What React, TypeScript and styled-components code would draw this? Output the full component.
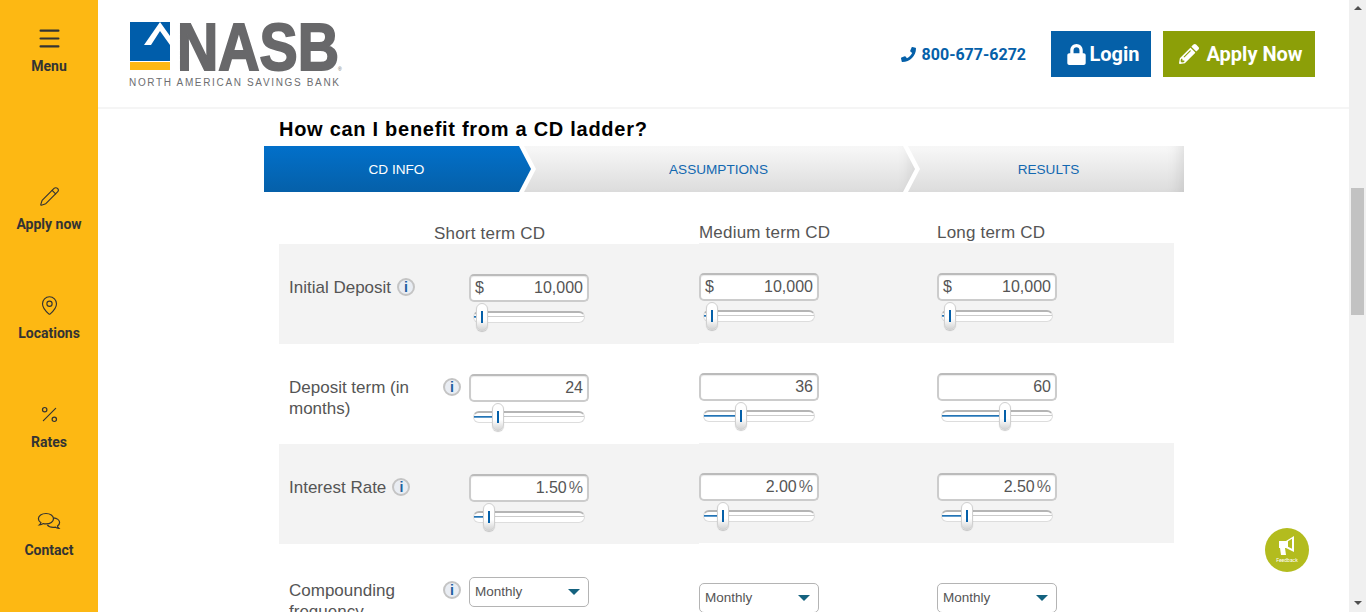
import React from 'react';
import styled, { createGlobalStyle } from 'styled-components';
import { Pencil, MapPin, Percent, Menu as MenuIcon } from 'lucide-react';
import { FaLock, FaPencilAlt, FaPhone } from 'react-icons/fa';

const GlobalStyle = createGlobalStyle`
  html, body {
    margin: 0;
    height: 612px;
    overflow: hidden;
    background: #fff;
  }
  * {
    box-sizing: border-box;
  }
`;

const Page = styled.div`
  display: flex;
  width: 1366px;
  height: 612px;
  overflow: hidden;
  position: relative;
  font-family: 'Liberation Sans', Arial, sans-serif;
`;

const Sidebar = styled.nav`
  width: 98px;
  flex: none;
  background: #fdb813;
  padding-top: 27px;
  display: flex;
  flex-direction: column;
`;

const SideItem = styled.a<{ $height: number }>`
  height: ${(p) => p.$height}px;
  display: flex;
  flex-direction: column;
  align-items: center;
  color: #333;
  font-family: Roboto, sans-serif;
  font-size: 14px;
  font-weight: 700;
  line-height: 18px;
  gap: 8px;
`;

const SideIcon = styled.span`
  height: 22px;
  display: flex;
  align-items: center;
  justify-content: center;
`;

const Main = styled.div`
  flex: 1;
  min-width: 0;
`;

const Header = styled.header`
  height: 109px;
  border-bottom: 2px solid #f5f5f5;
  display: flex;
  align-items: flex-start;
  justify-content: space-between;
  padding: 31px 34px 0 31px;
`;

const LogoSvg = styled.svg`
  display: block;
  margin-top: -12px;
`;

const HeaderActions = styled.div`
  display: flex;
  align-items: center;
  height: 46px;
`;

const Phone = styled.a`
  display: flex;
  align-items: center;
  gap: 6px;
  color: #0560a9;
  font-family: Roboto, sans-serif;
  font-size: 16px;
  font-weight: 700;
  margin-right: 13px;
`;

const ActionButton = styled.a<{ $bg: string; $width: number; $gap: number }>`
  width: ${(p) => p.$width}px;
  height: 46px;
  background: ${(p) => p.$bg};
  color: #fff;
  display: flex;
  align-items: center;
  justify-content: center;
  gap: ${(p) => p.$gap}px;
  padding-left: 4px;
  font-family: Roboto, sans-serif;
  font-size: 20px;
  font-weight: 700;
  margin-left: 12px;
`;

const Content = styled.div`
  width: 920px;
  margin-left: 166px;
`;

const Title = styled.h1`
  margin: 0;
  padding-left: 15px;
  height: 37px;
  padding-top: 8px;
  font-size: 20px;
  line-height: 24px;
  letter-spacing: 0.72px;
  font-weight: 700;
  color: #000;
`;

const Steps = styled.div`
  display: flex;
  height: 46px;
`;

const Step = styled.div<{ $active?: boolean; $width: number; $first?: boolean; $last?: boolean }>`
  width: ${(p) => p.$width}px;
  flex: none;
  margin-left: ${(p) => (p.$first ? 0 : -7)}px;
  display: flex;
  align-items: center;
  justify-content: center;
  padding-top: 1px;
  padding-right: 2px;
  padding-left: ${(p) => (p.$last ? 7 : 0)}px;
  font-size: 13.6px;
  color: ${(p) => (p.$active ? '#fff' : '#1368b0')};
  background: ${(p) =>
    p.$active
      ? 'linear-gradient(#0270ca, #0560a9)'
      : 'linear-gradient(#f8f8f8, #dcdcdc)'};
  box-shadow: ${(p) => (p.$active ? 'none' : 'inset -14px 0 14px -10px rgba(0, 0, 0, 0.1)')};
  clip-path: ${(p) =>
    p.$first
      ? 'polygon(0 0, calc(100% - 12px) 0, 100% 50%, calc(100% - 12px) 100%, 0 100%)'
      : p.$last
        ? 'polygon(0 0, 100% 0, 100% 100%, 0 100%, 12px 50%)'
        : 'polygon(0 0, calc(100% - 12px) 0, 100% 50%, calc(100% - 12px) 100%, 0 100%, 12px 50%)'};
`;

const Table = styled.div`
  display: flex;
  margin-left: 15px;
  width: 895px;
  color: #555;
  font-size: 17px;
`;

const Block = styled.div<{ $width: number; $top: number }>`
  width: ${(p) => p.$width}px;
  flex: none;
  padding-top: ${(p) => p.$top}px;
`;

const HeadRow = styled.div<{ $columns: string }>`
  display: grid;
  grid-template-columns: ${(p) => p.$columns};
  height: 28px;
  padding-top: 9px;
  line-height: 18px;
  letter-spacing: 0.2px;
  white-space: nowrap;
`;

const Row = styled.div<{ $columns: string; $shaded?: boolean; $padTop?: number }>`
  display: grid;
  grid-template-columns: ${(p) => p.$columns};
  align-content: start;
  height: 100px;
  padding-top: ${(p) => p.$padTop ?? 30}px;
  background: ${(p) => (p.$shaded ? '#f3f3f3' : 'transparent')};
`;

const LabelCell = styled.div`
  display: flex;
  align-items: flex-start;
  gap: 6px;
  padding: 3px 0 0 10px;
`;

const LabelText = styled.span`
  max-width: 148px;
  line-height: 21px;
  color: #555;
`;

const Info = styled.span`
  width: 18px;
  height: 18px;
  flex: none;
  margin-top: 1px;
  border-radius: 50%;
  border: 2px solid #c4c4c4;
  background: #e9edf3;
  color: #1f5f9f;
  font-size: 14px;
  font-weight: 700;
  line-height: 14px;
  text-align: center;
`;

const Field = styled.div`
  width: 120px;
  height: 28px;
  display: flex;
  align-items: center;
  justify-content: space-between;
  padding: 0 4px;
  background: #fff;
  border: 2px solid #ccc;
  border-top-color: #bbb;
  border-radius: 5px;
  box-shadow: inset 0 1px 1px rgba(0, 0, 0, 0.08);
  color: #555;
  font-size: 16px;
`;

const FieldValue = styled.span`
  margin-left: auto;
`;

const Unit = styled.span`
  margin-left: 2px;
  color: #666;
`;

const Slider = styled.div`
  position: relative;
  width: 112px;
  height: 12px;
  margin: 9px 0 0 4px;
  background: #fff;
  border: 1px solid #ddd;
  border-top: 2px solid #b5b5b5;
  border-radius: 6px;
`;

const SliderFill = styled.div`
  position: absolute;
  left: 0;
  top: 3px;
  height: 2px;
  background: linear-gradient(#0560a9, #7fb0d8);
`;

const SliderMid = styled.div`
  position: absolute;
  left: 0;
  right: 0;
  top: 3px;
  height: 1px;
  background: #ccc;
`;

const Thumb = styled.div`
  position: absolute;
  top: -10px;
  width: 12px;
  height: 28px;
  border-radius: 6px;
  background: linear-gradient(#fff 60%, #d4d4d4);
  border: 1px solid #d0d0d0;
  box-shadow: 0 1px 1px rgba(0, 0, 0, 0.2);

  &::after {
    content: '';
    position: absolute;
    left: 4px;
    top: 7px;
    width: 2px;
    height: 12px;
    background: #0560a9;
  }
`;

const SelectBox = styled.div`
  width: 120px;
  height: 30px;
  display: flex;
  align-items: center;
  justify-content: space-between;
  padding: 0 8px 1px 5px;
  background: #fff;
  border: 1px solid #b4b4b4;
  border-radius: 5px;
  font-size: 13.5px;
  color: #555;
`;

const Caret = styled.span`
  width: 0;
  height: 0;
  border-left: 6.5px solid transparent;
  border-right: 6.5px solid transparent;
  border-top: 6px solid #14627f;
`;

const Scrollbar = styled.div`
  width: 17px;
  flex: none;
  background: #f0f0f0;
  display: flex;
  flex-direction: column;
  align-items: center;
  justify-content: space-between;
  position: relative;
  padding: 6px 0 7px;
`;

const ScrollArrow = styled.span<{ $up?: boolean }>`
  width: 0;
  height: 0;
  border-left: 4px solid transparent;
  border-right: 4px solid transparent;
  ${(p) => (p.$up ? 'border-bottom: 4px solid #505050;' : 'border-top: 4px solid #505050;')}
`;

const ScrollThumb = styled.div`
  position: absolute;
  left: 2px;
  top: 188px;
  width: 13px;
  height: 127px;
  background: #c2c2c2;
`;

const Feedback = styled.a`
  position: absolute;
  left: 1265px;
  top: 528px;
  width: 44px;
  height: 44px;
  border-radius: 50%;
  background: #b3bc1e;
  color: #fff;
  display: flex;
  flex-direction: column;
  align-items: center;
  padding-top: 7px;
  font-family: Roboto, sans-serif;
  font-size: 5px;
  line-height: 6px;
`;

const firstColumns = '190px 120px';
const restColumns = '120px 118px 120px';

const CdSlider = ({ offset }: { offset: number }) => (
  <Slider>
    <SliderMid />
    <SliderFill style={{ width: offset + 2 }} />
    <Thumb style={{ left: offset - 1 }} />
  </Slider>
);

const AmountField = ({ prefix, value, unit }: { prefix?: string; value: string; unit?: string }) => (
  <Field>
    {prefix && <span>{prefix}</span>}
    <FieldValue>{value}</FieldValue>
    {unit && <Unit>{unit}</Unit>}
  </Field>
);

const Cell = ({ offset, ...field }: { offset: number; prefix?: string; value: string; unit?: string }) => (
  <div>
    <AmountField {...field} />
    <CdSlider offset={offset} />
  </div>
);

const Select = () => (
  <SelectBox>
    <span>Monthly</span>
    <Caret />
  </SelectBox>
);

const ContactIcon = () => (
  <svg width="24" height="20" viewBox="0 0 24 20" fill="none" stroke="#333" strokeWidth="1.2">
    <path d="M9 1.5c-4.3 0-7.6 2.3-7.6 5.2 0 1.6 1 3 2.6 4-.2.9-.8 1.6-1.6 2.2 1.5 0 2.8-.5 3.9-1.3.8.2 1.7.3 2.7.3 4.2 0 7.5-2.3 7.5-5.2S13.2 1.5 9 1.5z" />
    <path d="M16.4 5.8c3.5.3 6.2 2.3 6.2 4.8 0 1.4-.8 2.6-2.1 3.5.1.9.6 1.6 1.3 2.2-1.3 0-2.5-.4-3.4-1.2-.7.2-1.5.3-2.3.3-2.5 0-4.7-1-5.8-2.5" />
  </svg>
);

const Logo = () => (
  <LogoSvg width="214" height="76" viewBox="0 0 214 76">
    <rect x="1" y="3" width="40" height="39" fill="#005daa" />
    <rect x="1" y="43" width="40" height="8" fill="#fdb813" />
    <polygon points="15,26 31,3 41,17 41,26 31,12 22,26" fill="#fff" />
    <text
      x="48"
      y="51"
      fontFamily="'Liberation Sans', sans-serif"
      fontWeight="700"
      fontSize="67"
      fill="#68686a"
      stroke="#68686a"
      strokeWidth="2"
      textLength="162"
      lengthAdjust="spacingAndGlyphs"
    >
      NASB
    </text>
    <text x="209" y="52" fontFamily="'Liberation Sans', sans-serif" fontSize="5" fill="#68686a">®</text>
    <text
      x="0"
      y="67"
      fontFamily="'Liberation Sans', sans-serif"
      fontSize="10"
      fill="#6d6e71"
      textLength="210"
      lengthAdjust="spacing"
    >
      NORTH AMERICAN SAVINGS BANK
    </text>
  </LogoSvg>
);

const App = () => (
  <>
    <GlobalStyle />
    <Page>
      <Sidebar>
        <SideItem $height={158}>
          <SideIcon><MenuIcon size={27} color="#333" strokeWidth={1.8} /></SideIcon>
          <span>Menu</span>
        </SideItem>
        <SideItem $height={109}>
          <SideIcon><Pencil size={21} color="#333" strokeWidth={1.3} /></SideIcon>
          <span>Apply now</span>
        </SideItem>
        <SideItem $height={109}>
          <SideIcon><MapPin size={21} color="#333" strokeWidth={1.3} /></SideIcon>
          <span>Locations</span>
        </SideItem>
        <SideItem $height={108}>
          <SideIcon><Percent size={21} color="#333" strokeWidth={1.4} /></SideIcon>
          <span>Rates</span>
        </SideItem>
        <SideItem $height={90}>
          <SideIcon><ContactIcon /></SideIcon>
          <span>Contact</span>
        </SideItem>
      </Sidebar>

      <Main>
        <Header>
          <Logo />
          <HeaderActions>
            <Phone><FaPhone size={15} />800-677-6272</Phone>
            <ActionButton $bg="#0560a8" $width={100} $gap={2}><FaLock size={21} />Login</ActionButton>
            <ActionButton $bg="#8c9f08" $width={152} $gap={7}><FaPencilAlt size={20} />Apply Now</ActionButton>
          </HeaderActions>
        </Header>

        <Content>
          <Title>How can I benefit from a CD ladder?</Title>
          <Steps>
            <Step $first $active $width={267}>CD INFO</Step>
            <Step $width={391}>ASSUMPTIONS</Step>
            <Step $last $width={276}>RESULTS</Step>
          </Steps>

          <Table>
            <Block $width={420} $top={24}>
              <HeadRow $columns="155px 265px">
                <span />
                <span>Short term CD</span>
              </HeadRow>
              <Row $columns={firstColumns} $shaded>
                <LabelCell><LabelText>Initial Deposit</LabelText><Info>i</Info></LabelCell>
                <Cell prefix="$" value="10,000" offset={3} />
              </Row>
              <Row $columns={firstColumns}>
                <LabelCell><LabelText>Deposit term (in months)</LabelText><Info>i</Info></LabelCell>
                <Cell value="24" offset={19} />
              </Row>
              <Row $columns={firstColumns} $shaded>
                <LabelCell><LabelText>Interest Rate</LabelText><Info>i</Info></LabelCell>
                <Cell value="1.50" unit="%" offset={10} />
              </Row>
              <Row $columns={firstColumns} $padTop={33}>
                <LabelCell><LabelText>Compounding frequency</LabelText><Info>i</Info></LabelCell>
                <Select />
              </Row>
            </Block>

            <Block $width={475} $top={23}>
              <HeadRow $columns={restColumns}>
                <span>Medium term CD</span>
                <span />
                <span>Long term CD</span>
              </HeadRow>
              <Row $columns={restColumns} $shaded>
                <Cell prefix="$" value="10,000" offset={3} />
                <span />
                <Cell prefix="$" value="10,000" offset={3} />
              </Row>
              <Row $columns={restColumns}>
                <Cell value="36" offset={32} />
                <span />
                <Cell value="60" offset={58} />
              </Row>
              <Row $columns={restColumns} $shaded>
                <Cell value="2.00" unit="%" offset={14} />
                <span />
                <Cell value="2.50" unit="%" offset={20} />
              </Row>
              <Row $columns={restColumns} $padTop={40}>
                <Select />
                <span />
                <Select />
              </Row>
            </Block>
          </Table>
        </Content>
      </Main>

      <Scrollbar>
        <ScrollArrow $up />
        <ScrollThumb />
        <ScrollArrow />
      </Scrollbar>

      <Feedback>
        <svg width="20" height="22" viewBox="0 0 20 22" fill="#fff">
          <path d="M2 6h7l8-5v16l-8-4H8l1 7H4l-1-7H2z" />
          <path d="M11 6.200l4-2.400v10l-4-2z" fill="#b3bc1e" />
        </svg>
        <span>Feedback</span>
      </Feedback>
    </Page>
  </>
);

export default App;
